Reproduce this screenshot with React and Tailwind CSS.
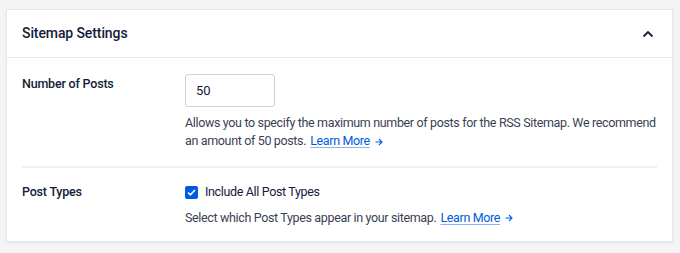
import React, { useState } from 'react';

function LearnMore() {
  return (
    <span className="inline-flex items-center gap-[5px] ml-[4px]">
      <a href="#" className="text-[#005ae0] underline underline-offset-2 decoration-[#8fb3ee]">Learn More</a>
      <svg width="8" height="8" viewBox="0 0 8 8" fill="none" className="mt-[1px]">
        <path d="M0.5 4h6.5M4 1l3 3-3 3" stroke="#005ae0" strokeWidth="1.1" />
      </svg>
    </span>
  );
}

export default function App() {
  const [posts, setPosts] = useState('50');
  const [allTypes, setAllTypes] = useState(true);

  return (
    <div className="w-[680px] h-[253px] bg-[#f3f4f5] pt-[9px] pl-[6px] font-['Roboto',sans-serif] text-[#141b38]">
      <div className="w-[667px] h-[233px] bg-white border border-[#e8e8eb] shadow-[0_1px_2px_rgba(0,0,0,0.06)]">
        <div className="h-[48px] flex items-center justify-between pl-[15px] pr-[18px] border-b border-[#e8e8eb]">
          <h2 className="text-[14px] font-medium tracking-[-0.1px]">Sitemap Settings</h2>
          <svg width="12" height="8" viewBox="0 0 12 8" fill="none">
            <path d="M1.5 6.5L6 2l4.5 4.5" stroke="#141b38" strokeWidth="1.8" />
          </svg>
        </div>

        <div className="px-[15px]">
          <div className="flex pt-[16px] pb-[16px] border-b-2 border-[#f0f0f1]">
            <div className="w-[163px] text-[12.5px] font-medium tracking-[-0.2px] pt-[1px]">Number of Posts</div>
            <div className="flex-1">
              <input
                value={posts}
                onChange={(e) => setPosts(e.target.value)}
                className="w-[90px] h-[33px] px-[10px] border border-[#d0d1d7] rounded-[3px] text-[13px] text-[#141b38] outline-none"
              />
              <p className="mt-[7px] text-[12.5px] leading-[18px] tracking-[-0.35px] text-[#3a3f55]">
                Allows you to specify the maximum number of posts for the RSS Sitemap. We recommend an amount of 50 posts.
                <LearnMore />
              </p>
            </div>
          </div>

          <div className="flex pt-[15px]">
            <div className="w-[163px] text-[12.5px] font-medium tracking-[-0.2px]">Post Types</div>
            <div className="flex-1">
              <label className="flex items-center gap-[7px] text-[12.5px] tracking-[-0.35px] text-[#141b38]">
                <span
                  onClick={() => setAllTypes(!allTypes)}
                  className="w-[13px] h-[13px] rounded-[2px] bg-[#005ae0] flex items-center justify-center"
                >
                  {allTypes && (
                    <svg width="9" height="7" viewBox="0 0 9 7" fill="none">
                      <path d="M1 3.5L3.3 5.8 8 1" stroke="white" strokeWidth="1.6" />
                    </svg>
                  )}
                </span>
                Include All Post Types
              </label>
              <p className="mt-[7px] text-[12.5px] leading-[18px] tracking-[-0.35px] text-[#3a3f55]">
                Select which Post Types appear in your sitemap.
                <LearnMore />
              </p>
            </div>
          </div>
        </div>
      </div>
    </div>
  );
}
